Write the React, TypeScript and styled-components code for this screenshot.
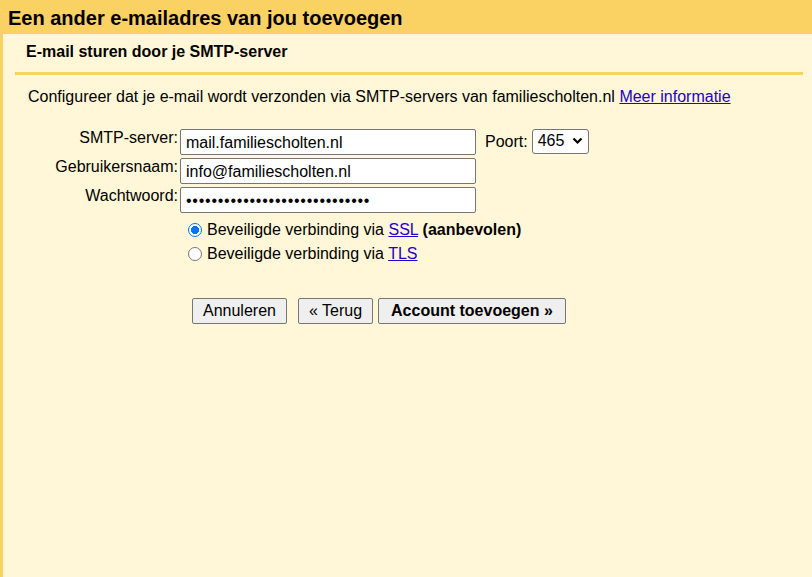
import styled, { createGlobalStyle } from "styled-components";

const GlobalStyle = createGlobalStyle`
  html, body {
    margin: 0;
    padding: 0;
    background: #fff7d7;
  }
  body {
    font-family: "Liberation Sans", Arial, sans-serif;
    color: #000;
  }
`;

const Page = styled.div`
  width: 812px;
  height: 577px;
  display: flex;
  flex-direction: column;
  overflow: hidden;
`;

const TopBar = styled.div`
  height: 34px;
  background: #fad163;
  display: flex;
  align-items: center;
  padding: 0 8px;
  box-sizing: border-box;
`;

const Title = styled.h1`
  margin: 0;
  font-size: 20px;
  font-weight: bold;
  padding-top: 2px;
`;

const Body = styled.div`
  flex: 1;
  border-left: 3px solid #fad163;
  padding: 0 9px 0 12px;
`;

const SectionHead = styled.div`
  border-bottom: 3px solid #fad163;
  padding: 9px 0 0 11px;
  height: 29px;
  box-sizing: content-box;
`;

const SubTitle = styled.h2`
  margin: 0;
  font-size: 16px;
  font-weight: bold;
`;

const Intro = styled.p`
  margin: 13px 0 0 13px;
  font-size: 16px;
`;

const Link = styled.a`
  color: #2200cc;
  text-decoration: underline;
`;

const Form = styled.div`
  margin: 23px 0 0 0;
  display: grid;
  grid-template-columns: 163px auto;
  row-gap: 3px;
  column-gap: 2px;
  align-items: start;
`;

const Label = styled.label`
  font-size: 16px;
  text-align: right;
  padding-top: 0;
`;

const FieldRow = styled.div`
  display: flex;
  align-items: center;
  gap: 9px;
`;

const TextInput = styled.input<{ $secret?: boolean }>`
  width: 296px;
  height: 26px;
  box-sizing: border-box;
  border: 1px solid #767676;
  border-radius: 2px;
  background: #fff;
  font-family: "Liberation Sans", Arial, sans-serif;
  font-size: 16px;
  padding: 1px 5px 0;
  color: #000;
  letter-spacing: ${({ $secret }) => ($secret ? "0.75px" : "normal")};
`;

const PortLabel = styled.span`
  font-size: 16px;
  margin-top: -1px;
`;

const SelectBox = styled.div`
  width: 57px;
  height: 25px;
  box-sizing: border-box;
  border: 1px solid #767676;
  border-radius: 3px;
  background: #fff;
  display: flex;
  align-items: center;
  justify-content: space-between;
  padding: 0 5px 0 5px;
  font-size: 16px;
  margin-top: -2px;
  margin-left: -5px;
`;

const Options = styled.div`
  grid-column: 2;
  display: flex;
  flex-direction: column;
  gap: 3px;
  margin-top: 3px;
  margin-left: 6px;
`;

const RadioRow = styled.label`
  display: flex;
  align-items: center;
  gap: 5px;
  font-size: 16px;
  height: 21px;
`;

const Radio = styled.span<{ $checked?: boolean }>`
  width: 14px;
  height: 14px;
  border-radius: 50%;
  box-sizing: border-box;
  border: ${({ $checked }) => ($checked ? "1px solid #0075ff" : "1px solid #767676")};
  background: ${({ $checked }) =>
    $checked ? "radial-gradient(circle, #0075ff 0 3.8px, #fff 4.3px)" : "#fff"};
  margin-left: 2px;
  flex-shrink: 0;
`;

const Buttons = styled.div`
  grid-column: 2;
  display: flex;
  gap: 5px;
  margin-top: 31px;
  margin-left: 12px;
`;

const Button = styled.button<{ $primary?: boolean; $gap?: boolean }>`
  height: 26px;
  box-sizing: border-box;
  border: 1px solid #767676;
  border-radius: 2px;
  background: #efefef;
  font-family: "Liberation Sans", Arial, sans-serif;
  font-size: 16px;
  font-weight: ${({ $primary }) => ($primary ? "bold" : "normal")};
  padding: ${({ $primary }) => ($primary ? "0 12px" : "0 10px")};
  color: #000;
  margin-left: ${({ $gap }) => ($gap ? "6px" : "0")};
`;

function Chevron() {
  return (
    <svg width="11" height="8" viewBox="0 0 11 8">
      <path d="M1.5 1.5 L5.5 5.5 L9.5 1.5" fill="none" stroke="#000" strokeWidth="2.2" />
    </svg>
  );
}

export default function App() {
  return (
    <Page>
      <GlobalStyle />
      <TopBar>
        <Title>Een ander e-mailadres van jou toevoegen</Title>
      </TopBar>
      <Body>
        <SectionHead>
          <SubTitle>E-mail sturen door je SMTP-server</SubTitle>
        </SectionHead>
        <Intro>
          Configureer dat je e-mail wordt verzonden via SMTP-servers van familiescholten.nl{" "}
          <Link href="#">Meer informatie</Link>
        </Intro>
        <Form>
          <Label>SMTP-server:</Label>
          <FieldRow>
            <TextInput defaultValue="mail.familiescholten.nl" />
            <PortLabel>Poort:</PortLabel>
            <SelectBox>
              465
              <Chevron />
            </SelectBox>
          </FieldRow>
          <Label>Gebruikersnaam:</Label>
          <FieldRow>
            <TextInput defaultValue="info@familiescholten.nl" />
          </FieldRow>
          <Label>Wachtwoord:</Label>
          <FieldRow>
            <TextInput type="password" $secret defaultValue="wachtwoord1234567890abcdefghi" />
          </FieldRow>
          <Options>
            <RadioRow>
              <Radio $checked />
              <span>
                Beveiligde verbinding via <Link href="#">SSL</Link> <b>(aanbevolen)</b>
              </span>
            </RadioRow>
            <RadioRow>
              <Radio />
              <span>
                Beveiligde verbinding via <Link href="#">TLS</Link>
              </span>
            </RadioRow>
          </Options>
          <Buttons>
            <Button>Annuleren</Button>
            <Button $gap>« Terug</Button>
            <Button $primary>Account toevoegen »</Button>
          </Buttons>
        </Form>
      </Body>
    </Page>
  );
}
